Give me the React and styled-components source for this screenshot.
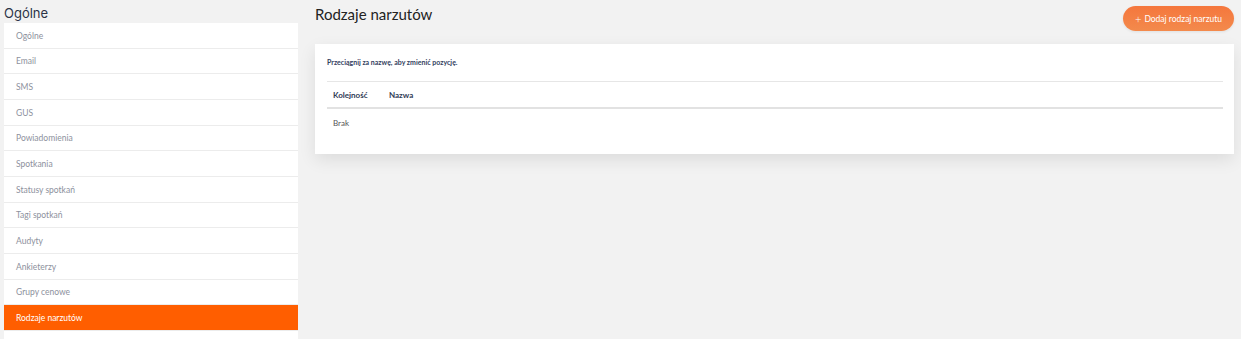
import React from 'react';
import styled, { createGlobalStyle } from 'styled-components';

const GlobalStyle = createGlobalStyle`
  body {
    margin: 0;
    background: #f2f2f2;
    font-family: "Lato", "Open Sans", sans-serif;
  }
`;

const Page = styled.div`
  display: flex;
  gap: 17px;
  padding: 0 7px 0 4px;
  height: 339px;
  overflow: hidden;
`;

const Sidebar = styled.aside`
  width: 294px;
  flex-shrink: 0;
`;

const SideTitle = styled.h2`
  margin: 0;
  height: 23px;
  line-height: 27px;
  font-family: "Inter", "Open Sans", sans-serif;
  font-size: 13px;
  font-weight: 400;
  color: #2c3447;
`;

const MenuList = styled.ul`
  list-style: none;
  margin: 0;
  padding: 0;
`;

const MenuItem = styled.li`
  height: 25.67px;
  box-sizing: border-box;
  display: flex;
  align-items: center;
  padding: 1px 0 0 12px;
  font-size: 8.5px;
  color: ${p => (p.$active ? '#ffffff' : '#8d919d')};
  background: ${p => (p.$active ? '#ff5e00' : '#ffffff')};
  border-bottom: 1px solid #ececec;
`;

const Main = styled.main`
  flex: 1;
`;

const TopBar = styled.div`
  display: flex;
  justify-content: space-between;
  align-items: flex-start;
  height: 44px;
`;

const Title = styled.h1`
  margin: 0;
  padding-top: 5px;
  font-size: 15px;
  font-weight: 400;
  color: #222;
`;

const AddButton = styled.button`
  margin-top: 6px;
  height: 25px;
  width: 111px;
  padding: 0;
  border: none;
  border-radius: 13px;
  background: linear-gradient(180deg, #f5773d, #f38a4c);
  color: #fff;
  font-family: inherit;
  font-size: 8.5px;
  box-shadow: 0 1px 3px rgba(0, 0, 0, 0.08);
`;

const Card = styled.section`
  background: #fff;
  padding: 14px 11px 17px 12px;
  box-shadow: 0 6px 16px rgba(0, 0, 0, 0.09);
`;

const Hint = styled.p`
  margin: 0 0 15px;
  font-size: 7px;
  font-weight: 700;
  color: #33405e;
`;

const Table = styled.table`
  width: 100%;
  table-layout: fixed;
  border-collapse: collapse;
  font-size: 8px;
`;

const HeadCell = styled.th`
  text-align: left;
  font-weight: 700;
  color: #2f3a55;
  height: 25px;
  padding: 0 0 0 ${p => p.$pad}px;
  width: ${p => p.$w || 'auto'};
  border-top: 1px solid #e6e6e6;
  border-bottom: 2px solid #e2e2e2;
`;

const Cell = styled.td`
  padding: 0 0 0 6px;
  height: 28px;
  color: #555;
`;

const Plus = styled.span`
  font-size: 11px;
  margin-right: 3px;
  font-weight: 300;
  vertical-align: -1px;
`;

const items = [
  'Ogólne',
  'Email',
  'SMS',
  'GUS',
  'Powiadomienia',
  'Spotkania',
  'Statusy spotkań',
  'Tagi spotkań',
  'Audyty',
  'Ankieterzy',
  'Grupy cenowe',
  'Rodzaje narzutów',
  '',
];

export default function App() {
  return (
    <>
      <GlobalStyle />
      <Page>
        <Sidebar>
          <SideTitle>Ogólne</SideTitle>
          <MenuList>
            {items.map((it, i) => (
              <MenuItem key={i} $active={it === 'Rodzaje narzutów'}>
                {it}
              </MenuItem>
            ))}
          </MenuList>
        </Sidebar>
        <Main>
          <TopBar>
            <Title>Rodzaje narzutów</Title>
            <AddButton>
              <Plus>+</Plus>Dodaj rodzaj narzutu
            </AddButton>
          </TopBar>
          <Card>
            <Hint>Przeciągnij za nazwę, aby zmienić pozycję.</Hint>
            <Table>
              <thead>
                <tr>
                  <HeadCell $w="56px" $pad={6}>Kolejność</HeadCell>
                  <HeadCell $pad={0}>Nazwa</HeadCell>
                </tr>
              </thead>
              <tbody>
                <tr>
                  <Cell colSpan={2}>Brak</Cell>
                </tr>
              </tbody>
            </Table>
          </Card>
        </Main>
      </Page>
    </>
  );
}
